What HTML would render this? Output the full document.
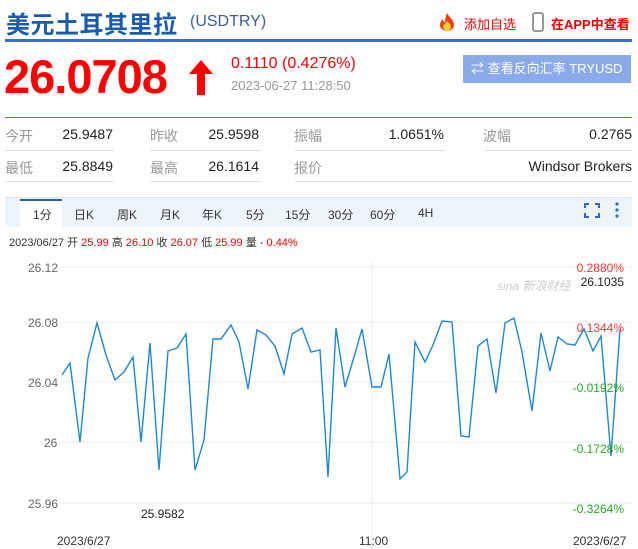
<!DOCTYPE html>
<html><head><meta charset="utf-8"><style>
*{margin:0;padding:0;box-sizing:border-box}
body{width:638px;height:549px;overflow:hidden;background:#fff;font-family:"Liberation Sans","Noto Sans CJK SC",sans-serif;position:relative}
.a{position:absolute;white-space:nowrap}
.lbl{color:#999;font-size:14px}
.val{color:#222;font-size:14px;text-align:right}
.ul{position:absolute;height:1px;background:#ddd}
.tab{position:absolute;top:206px;font-size:12px;color:#333}
.ax{position:absolute;font-size:12px;color:#666}
.rp{position:absolute;font-size:12px;right:14px}
</style></head><body>
<div class="a" style="left:6px;top:5px;font-size:24px;font-weight:bold;color:#1a5bb0;letter-spacing:0.5px">美元土耳其里拉</div>
<div class="a" style="left:190px;top:13px;font-size:16px;color:#3c5d9a">(USDTRY)</div>
<svg class="a" style="left:437px;top:12px" width="20" height="20" viewBox="0 0 20 20"><path d="M10 1C12 5 17 8 17 13a7 6 0 0 1-14 0c0-3 2-5 3-6 0 2 1 3 2 3C8 7 9 4 10 1z" fill="#f04010"/><path d="M10 9c2 2 4 3 4 6a4 4 0 0 1-8 0c0-2 2-3 4-6z" fill="#fc3"/></svg>
<div class="a" style="left:464px;top:14px;font-size:13px;color:#e00">添加自选</div>
<div class="a" style="left:532px;top:12px;width:12px;height:20px;border:2px solid #999;border-radius:3px"></div>
<div class="a" style="left:551px;top:14px;font-size:13px;color:#e00;font-weight:bold">在APP中查看</div>
<div class="a" style="left:5px;top:39px;width:627px;height:3px;background:#3a6cc6"></div>
<div class="a" style="left:4px;top:49px;font-size:47px;font-weight:bold;color:#f00;letter-spacing:-1px">26.0708</div>
<svg class="a" style="left:188px;top:59px" width="26" height="36" viewBox="0 0 26 36"><path d="M13 1L25 15H17V36H9V15H1z" fill="#f00"/></svg>
<div class="a" style="left:231px;top:55px;font-size:16px;color:#f00">0.1110 (0.4276%)</div>
<div class="a" style="left:231px;top:78px;font-size:13px;color:#999">2023-06-27 11:28:50</div>
<div class="a" style="left:463px;top:55px;width:168px;height:28px;background:#8aaaea;color:#fff;font-size:13px;line-height:28px;padding-left:8px">⇄ 查看反向汇率 TRYUSD</div>
<div class="a" style="left:5px;top:117px;width:627px;height:1px;background:#3a7ad0"></div>
<div class="a lbl" style="left:5px;top:126px">今开</div><div class="a val" style="left:50px;width:63px;top:126px">25.9487</div>
<div class="a lbl" style="left:150px;top:126px">昨收</div><div class="a val" style="left:190px;width:69px;top:126px">25.9598</div>
<div class="a lbl" style="left:294px;top:126px">振幅</div><div class="a val" style="left:300px;width:144px;top:126px">1.0651%</div>
<div class="a lbl" style="left:483px;top:126px">波幅</div><div class="a val" style="left:500px;width:132px;top:126px">0.2765</div>
<div class="a lbl" style="left:5px;top:158px">最低</div><div class="a val" style="left:50px;width:63px;top:158px">25.8849</div>
<div class="a lbl" style="left:150px;top:158px">最高</div><div class="a val" style="left:190px;width:69px;top:158px">26.1614</div>
<div class="a lbl" style="left:294px;top:158px">报价</div><div class="a val" style="left:400px;width:232px;top:158px">Windsor Brokers</div>
<div class="ul" style="left:5px;width:109px;top:150px"></div><div class="ul" style="left:150px;width:111px;top:150px"></div><div class="ul" style="left:295px;width:150px;top:150px"></div><div class="ul" style="left:485px;width:147px;top:150px"></div>
<div class="ul" style="left:5px;width:109px;top:181px"></div><div class="ul" style="left:150px;width:111px;top:181px"></div><div class="ul" style="left:295px;width:337px;top:181px"></div>
<div class="a" style="left:5px;top:197px;width:627px;height:30px;background:#eef4fc;border-top:1px solid #dde6f3"></div>
<div class="a" style="left:20px;top:199px;width:42px;height:28px;background:#fff;border-top:2px solid #2a5fb0"></div>
<div class="tab" style="left:33px">1分</div><div class="tab" style="left:74px">日K</div><div class="tab" style="left:117px">周K</div><div class="tab" style="left:160px">月K</div><div class="tab" style="left:202px">年K</div><div class="tab" style="left:246px">5分</div><div class="tab" style="left:285px">15分</div><div class="tab" style="left:328px">30分</div><div class="tab" style="left:370px">60分</div><div class="tab" style="left:418px">4H</div>
<svg class="a" style="left:584px;top:203px" width="16" height="15" viewBox="0 0 16 15"><path d="M1 5V1H5M11 1H15V5M15 10V14H11M5 14H1V10" fill="none" stroke="#2a6cc8" stroke-width="2"/></svg>
<svg class="a" style="left:614px;top:202px" width="6" height="16"><circle cx="3" cy="2" r="1.6" fill="#2a6cc8"/><circle cx="3" cy="8" r="1.6" fill="#2a6cc8"/><circle cx="3" cy="14" r="1.6" fill="#2a6cc8"/></svg>
<div class="a" style="left:9px;top:234px;font-size:11px;color:#333">2023/06/27 开 <span style="color:#f00">25.99</span> 高 <span style="color:#f00">26.10</span> 收 <span style="color:#f00">26.07</span> 低 <span style="color:#f00">25.99</span> 量 - <span style="color:#f00">0.44%</span></div>
<svg class="a" style="left:0;top:255px" width="638" height="294">
<g stroke="#eee" stroke-width="1"><line x1="60" y1="12" x2="632" y2="12"/><line x1="60" y1="67" x2="632" y2="67"/><line x1="60" y1="127" x2="632" y2="127"/><line x1="60" y1="187" x2="632" y2="187"/><line x1="60" y1="248" x2="632" y2="248"/><line x1="372" y1="7" x2="372" y2="294"/></g>
<text x="497" y="35" font-size="12" fill="#ccc" font-style="italic" font-family="Liberation Sans,Noto Sans CJK SC,sans-serif">sina 新浪财经</text>
<polyline fill="none" stroke="#1e88d4" stroke-width="1.4" points="62,120 70,108 80,187 88,103 97,68 106,100 115,125 124,117 133,102 141,187 150,88 159,215 168,96 177,93 186,79 195,215 204,185 213,84 221,84 231,70 239,87 248,134 257,75 266,80 275,91 284,119 292,79 302,73 311,97 320,95 328,222 336,73 345,132 354,102 362,74 372,132 381,132 389,99 400,224 407,217 415,87 425,107 433,90 442,66 452,67 461,181 469,182 478,91 487,84 496,138 505,68 514,63 522,97 532,156 541,78 550,116 558,82 567,89 575,90 584,74 593,96 601,81 611,201 620,74"/>
</svg>
<div class="ax" style="left:28px;top:261px">26.12</div><div class="ax" style="left:28px;top:316px">26.08</div><div class="ax" style="left:28px;top:376px">26.04</div><div class="ax" style="left:44px;top:436px">26</div><div class="ax" style="left:28px;top:497px">25.96</div>
<div class="rp" style="top:261px;color:#f33">0.2880%</div>
<div class="rp" style="top:275px;color:#222">26.1035</div>
<div class="rp" style="top:321px;color:#f33">0.1344%</div>
<div class="rp" style="top:381px;color:#2a2">-0.0192%</div>
<div class="rp" style="top:442px;color:#2a2">-0.1728%</div>
<div class="rp" style="top:502px;color:#2a2">-0.3264%</div>
<div class="ax" style="left:141px;top:507px;color:#222">25.9582</div>
<div class="ax" style="left:57px;top:534px;color:#333">2023/6/27</div>
<div class="ax" style="left:359px;top:534px;color:#333">11:00</div>
<div class="ax" style="left:573px;top:534px;color:#333">2023/6/27</div>
</body></html>
